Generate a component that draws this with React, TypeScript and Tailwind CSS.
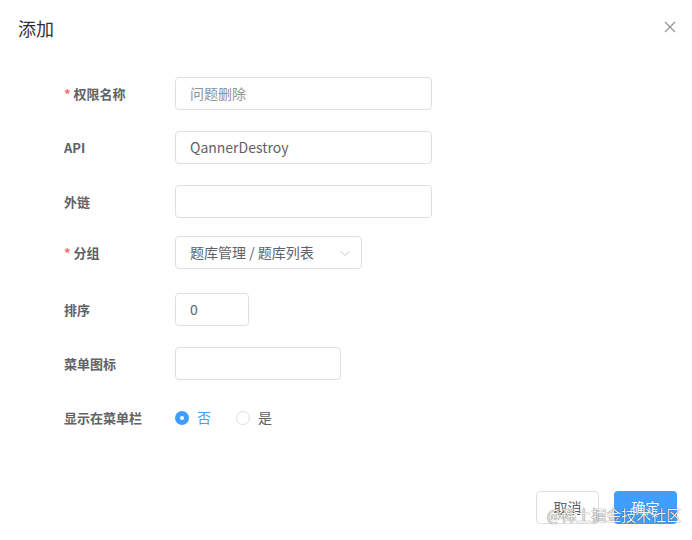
const font = { fontFamily: '"Noto Sans CJK SC", "Noto Sans", sans-serif' }

function Label({ text, required }: { text: string; required?: boolean }) {
  return (
    <div className="flex w-[111px] shrink-0 items-center text-[13px] font-bold text-[#606266]">
      {required && <span className="mr-[3px] text-[#f56c6c]">*</span>}
      {text}
    </div>
  )
}

function Input({ width, value, muted }: { width: string; value?: string; muted?: boolean }) {
  return (
    <div
      className={`flex h-[33px] items-center rounded-[4px] border border-[#dcdfe6] bg-white px-[14px] text-[14px] ${width} ${
        muted ? 'text-[#909399]' : 'text-[#606266]'
      }`}
    >
      {value}
    </div>
  )
}

export default function App() {
  return (
    <div className="relative h-[540px] w-[692px] overflow-hidden bg-white" style={font}>
      {/* Header */}
      <div className="flex items-center justify-between pl-[18px] pr-[16px] pt-[15px]">
        <div className="text-[18px] leading-[26px] text-[#303133]">添加</div>
        <svg width="12" height="12" viewBox="0 0 12 12" className="mt-[-2px]">
          <path d="M1 1L11 11M11 1L1 11" stroke="#909399" strokeWidth="1.2" />
        </svg>
      </div>

      {/* Form */}
      <div className="mt-[36px] flex flex-col pl-[64px]">
        <div className="flex h-[33px]">
          <Label text="权限名称" required />
          <Input width="w-[257px]" value="问题删除" muted />
        </div>
        <div className="mt-[21px] flex h-[33px]">
          <Label text="API" />
          <Input width="w-[257px]" value="QannerDestroy" />
        </div>
        <div className="mt-[21px] flex h-[33px]">
          <Label text="外链" />
          <Input width="w-[257px]" />
        </div>
        <div className="mt-[18px] flex h-[33px]">
          <Label text="分组" required />
          <div className="flex h-[33px] w-[187px] items-center justify-between rounded-[4px] border border-[#dcdfe6] bg-white pl-[14px] pr-[10px] text-[14px] text-[#606266]">
            <span>题库管理 / 题库列表</span>
            <svg width="12" height="12" viewBox="0 0 12 12">
              <path d="M1.5 4L6 8.5L10.5 4" fill="none" stroke="#c0c4cc" strokeWidth="1" />
            </svg>
          </div>
        </div>
        <div className="mt-[24px] flex h-[33px]">
          <Label text="排序" />
          <Input width="w-[74px]" value="0" />
        </div>
        <div className="mt-[21px] flex h-[33px]">
          <Label text="菜单图标" />
          <Input width="w-[166px]" />
        </div>
        <div className="mt-[21px] flex h-[33px]">
          <Label text="显示在菜单栏" />
          <div className="flex items-center text-[14px]">
            <span className="flex h-[14px] w-[14px] items-center justify-center rounded-full bg-[#409eff]">
              <span className="h-[4px] w-[4px] rounded-full bg-white" />
            </span>
            <span className="ml-[8px] text-[#409eff]">否</span>
            <span className="ml-[25px] h-[14px] w-[14px] rounded-full border border-[#dcdfe6] bg-white" />
            <span className="ml-[8px] text-[#606266]">是</span>
          </div>
        </div>
      </div>

      {/* Footer */}
      <div className="mt-[57px] flex justify-end gap-[15px] pr-[15px]">
        <button className="h-[33px] w-[63px] rounded-[4px] border border-[#dcdfe6] bg-white text-[14px] text-[#606266]">
          取消
        </button>
        <button className="h-[33px] w-[63px] rounded-[4px] bg-[#409eff] text-[14px] text-white">确定</button>
      </div>

      {/* Watermark */}
      <div className="absolute left-[547px] top-[504px] text-[15px] text-[#f2f2f2] [text-shadow:0_0_1px_rgba(0,0,0,0.9)]">
        @稀土掘金技术社区
      </div>
    </div>
  )
}
